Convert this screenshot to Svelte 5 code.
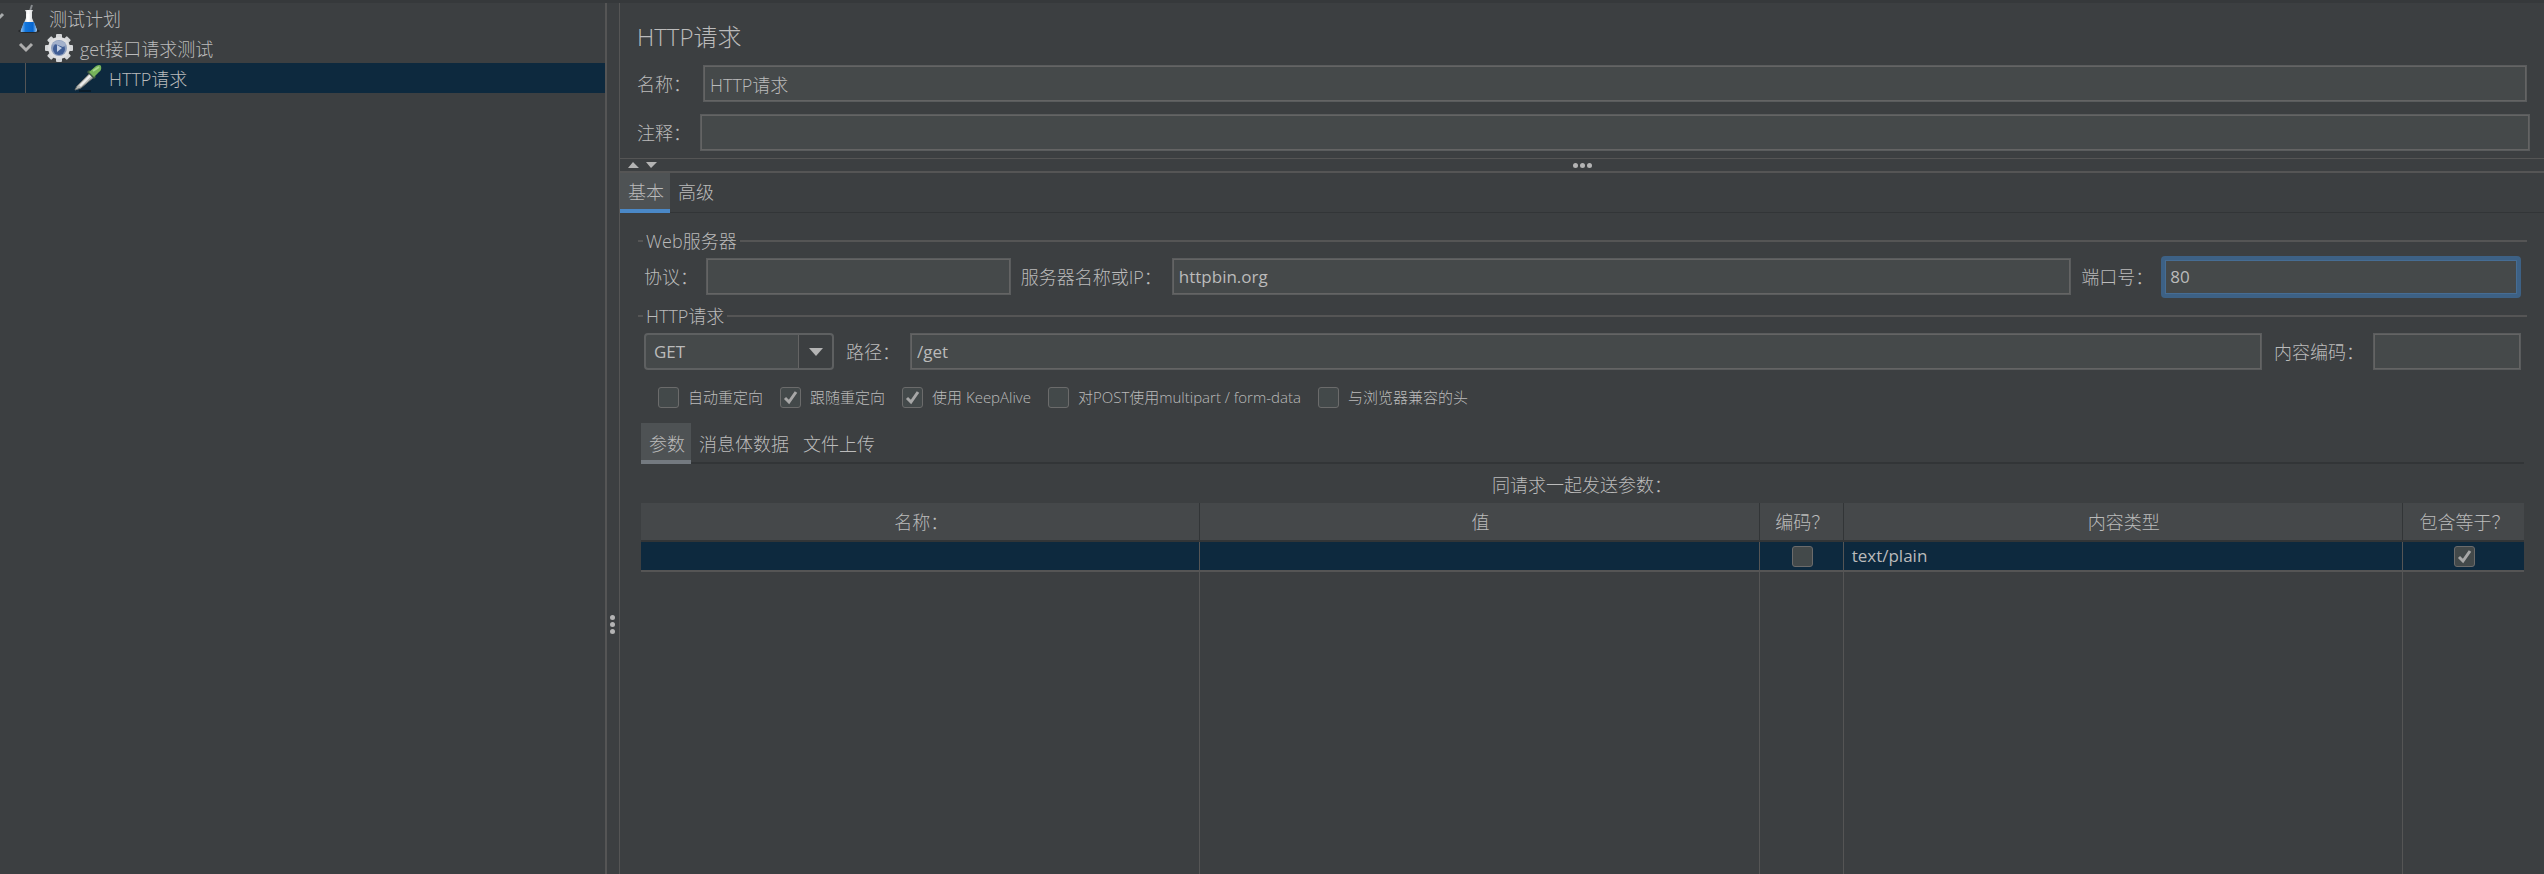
<script lang="ts">
  let name = $state('HTTP请求');
  let comment = $state('');
  let protocol = $state('');
  let server = $state('httpbin.org');
  let port = $state('80');
  let method = $state('GET');
  let path = $state('/get');
  let encoding = $state('');
  let options = $state([
    { label: '自动重定向', on: false },
    { label: '跟随重定向', on: true },
    { label: '使用 KeepAlive', on: true },
    { label: '对POST使用multipart / form-data', on: false },
    { label: '与浏览器兼容的头', on: false }
  ]);
  let rows = $state([{ name: '', value: '', encode: false, type: 'text/plain', equals: true }]);
  let mainTab = $state('基本');
  let subTab = $state('参数');
</script>

<div class="app">
  <nav class="tree" aria-label="测试计划">
    <div class="node">
      <svg class="twisty" width="14" height="30" viewBox="0 0 14 30"><path d="M-10 12 L-4 18 L3 11" fill="none" stroke="#a9acad" stroke-width="3" /></svg>
      <svg class="flask" width="24" height="30" viewBox="0 0 24 30">
        <defs>
          <linearGradient id="glass" x1="0" x2="1"><stop offset="0" stop-color="#9b9fa3" /><stop offset=".45" stop-color="#fff" /><stop offset="1" stop-color="#b5b9bd" /></linearGradient>
          <linearGradient id="liquid" x1="0" x2="1"><stop offset="0" stop-color="#8fc0f0" /><stop offset=".3" stop-color="#1276dc" /><stop offset=".75" stop-color="#0866cf" /><stop offset="1" stop-color="#a4cdf5" /></linearGradient>
        </defs>
        <ellipse cx="12" cy="28" rx="11" ry="2" fill="#26292b" />
        <path d="M13 8 L15 2" stroke="#888c8f" stroke-width="2" />
        <path d="M8 7 H16 L15 9 V15 L20 27 Q20 29 18 29 H5 Q3 29 4 27 L9 15 V9 Z" fill="url(#glass)" />
        <path d="M7 19 H17 L20 27 Q20 29 18 29 H5 Q3 29 4 27 Z" fill="url(#liquid)" />
        <path d="M11 11 V18" stroke="#fff" stroke-width="3" />
      </svg>
      <span>测试计划</span>
    </div>
    <div class="node child">
      <svg class="chevron" width="16" height="12" viewBox="0 0 16 12"><path d="M2 2 L8 8 L14 2" fill="none" stroke="#adadad" stroke-width="3" /></svg>
      <svg class="gear" width="30" height="30" viewBox="0 0 30 30">
        <g fill="#d4d6d8">
          <rect x="12" y="1" width="6" height="28" rx="1" />
          <rect x="12" y="1" width="6" height="28" rx="1" transform="rotate(45 15 15)" />
          <rect x="12" y="1" width="6" height="28" rx="1" transform="rotate(90 15 15)" />
          <rect x="12" y="1" width="6" height="28" rx="1" transform="rotate(135 15 15)" />
          <circle cx="15" cy="15" r="11" fill="#dfe0e2" />
        </g>
        <circle cx="15" cy="15" r="8" fill="#8c9dbd" />
        <circle cx="15" cy="16" r="6" fill="#3f5d95" />
        <path d="M8 12 A8 8 0 0 1 22 12 L19 14 L11 11 Z" fill="#a3b1cb" />
        <path d="M13 12 L18 15 L13 19 Z" fill="#c3cfe4" />
      </svg>
      <span>get接口请求测试</span>
    </div>
    <div class="node leaf selected">
      <svg class="dropper" width="30" height="30" viewBox="0 0 30 30">
        <path d="M6 28 L18 28" stroke="#091b29" stroke-width="2" />
        <path d="M2 27 L4 23 L17 10 L21 14 L8 25 Z" fill="#b9bcb9" stroke="#6f7472" />
        <path d="M7 23 L18 12" stroke="#eee" stroke-width="2" />
        <path d="M15 8 L22 15" stroke="#3f5a40" stroke-width="3" />
        <path d="M16 9 L23 3 Q27 1 28 3 Q29 7 26 9 L21 14 Z" fill="#77b45a" />
        <path d="M20 8 L26 4" stroke="#a6d68c" stroke-width="2" />
      </svg>
      <span>HTTP请求</span>
    </div>
  </nav>

  <div class="splitter" role="separator" aria-orientation="vertical"><i></i><i></i><i></i></div>

  <main>
    <header class="head">
      <h1>HTTP请求</h1>
      <div class="line name"><label for="name">名称：</label><input id="name" class="box" bind:value={name} /></div>
      <div class="line comment"><label for="comment">注释：</label><input id="comment" class="box" bind:value={comment} /></div>
    </header>

    <div class="hsplit">
      <svg width="30" height="8" viewBox="0 0 30 8" fill="#b4b4b4"><path d="M0 7 L5 1 L11 7 Z M18 1 H29 L23 7 Z" /></svg>
      <div class="grip"><i></i><i></i><i></i></div>
    </div>

    <div class="tabs">
      {#each ['基本', '高级'] as t}
        <button class:active={mainTab === t} onclick={() => (mainTab = t)}>{t}</button>
      {/each}
    </div>

    <div class="body">
      <section>
        <h2>Web服务器</h2>
        <div class="server">
          <label for="protocol">协议：</label><input id="protocol" class="box" bind:value={protocol} />
          <label for="server">服务器名称或IP：</label><input id="server" class="box latin" bind:value={server} />
          <label for="port">端口号：</label><input id="port" class="box latin focused" bind:value={port} />
        </div>
      </section>

      <section class="request">
        <h2>HTTP请求</h2>
        <div class="target">
          <div class="combo">
            <select class="latin" aria-label="HTTP请求" bind:value={method}>
              <option>GET</option><option>POST</option><option>PUT</option><option>DELETE</option>
            </select>
            <svg width="14" height="8" viewBox="0 0 14 8"><path d="M0 0 H14 L7 8 Z" fill="#b4b4b4" /></svg>
          </div>
          <label for="path">路径：</label><input id="path" class="box latin" bind:value={path} />
          <label for="encoding">内容编码：</label><input id="encoding" class="box" bind:value={encoding} />
        </div>
        <div class="options">
          {#each options as o}
            <label><input type="checkbox" bind:checked={o.on} />{o.label}</label>
          {/each}
        </div>
      </section>

      <div class="tabs sub">
        {#each ['参数', '消息体数据', '文件上传'] as t}
          <button class:active={subTab === t} onclick={() => (subTab = t)}>{t}</button>
        {/each}
      </div>

      <div class="caption">同请求一起发送参数：</div>

      <div class="tablewrap">
        <table>
          <colgroup><col class="wide" /><col class="wide" /><col class="enc" /><col class="wide" /><col class="eq" /></colgroup>
          <thead><tr><th>名称：</th><th>值</th><th>编码？</th><th>内容类型</th><th>包含等于？</th></tr></thead>
          <tbody>
            {#each rows as r}
              <tr class="data">
                <td>{r.name}</td>
                <td>{r.value}</td>
                <td class="mid"><input type="checkbox" aria-label="编码？" bind:checked={r.encode} /></td>
                <td class="latin">{r.type}</td>
                <td class="mid"><input type="checkbox" aria-label="包含等于？" bind:checked={r.equals} /></td>
              </tr>
            {/each}
            <tr class="rest"><td></td><td></td><td></td><td></td><td></td></tr>
          </tbody>
        </table>
      </div>
    </div>
  </main>
</div>

<style>
  :global(body) { background: #3c3f41; }
  .app, .app * { box-sizing: border-box; }
  .app {
    display: flex;
    min-height: 100vh;
    border-top: 3px solid #36393b;
    background: #3c3f41;
    color: #bbb;
    font: 300 18px/24px "Open Sans", "Noto Sans CJK SC", sans-serif;
  }
  input, select, button { font: inherit; color: inherit; }
  .latin { font-size: 17px; font-weight: 400; }

  .tree { flex: 0 0 605px; }
  .node { display: flex; align-items: center; height: 30px; white-space: nowrap; }
  .node span { padding-top: 2px; }
  .node svg { flex: none; }
  .twisty { margin-right: 3px; }
  .flask { margin-right: 8px; }
  .child { padding-left: 18px; }
  .chevron { margin-right: 10px; }
  .gear { margin-right: 6px; }
  .leaf { padding-left: 73px; }
  .dropper { margin-right: 6px; }
  .selected { background: linear-gradient(#555, #555) 25px 0 / 1px 100% no-repeat #0d293e; }

  .splitter {
    display: flex;
    flex: 0 0 15px;
    flex-direction: column;
    align-items: center;
    gap: 2px;
    padding-top: 70vh;
    padding-right: 1px;
    border-left: 2px solid #555;
    border-right: 1px solid #555;
  }
  .splitter i, .grip i { width: 5px; height: 5px; border-radius: 50%; background: #b4b4b4; }

  main { display: flex; flex: 1; flex-direction: column; min-width: 0; }
  .head { padding: 18px 14px 7px 17px; }
  h1 { margin: 0 0 12px; font-size: 24px; font-weight: 300; line-height: 32px; }
  .line { display: flex; align-items: center; }
  .line label { flex: none; width: 63px; }
  .name { padding-right: 3px; }
  .name label { width: 66px; }
  .comment { margin-top: 12px; }
  .box {
    flex: 1;
    width: 100%;
    min-width: 0;
    height: 37px;
    padding: 0 6px;
    border: 1px solid #5a5c5d;
    border-radius: 0;
    outline: none;
    background: #45494a;
    box-shadow: inset 0 0 0 1px #646464;
  }
  .focused {
    height: 42px;
    padding: 0 5px;
    border: 4px solid #3d6185;
    border-radius: 4px;
    box-shadow: inset 0 0 0 1px #466d94;
  }

  .hsplit {
    display: grid;
    grid-template-columns: 30px 1fr 30px;
    align-items: center;
    height: 15px;
    padding: 0 8px;
    border-top: 1px solid #555;
    border-bottom: 2px solid #555;
  }
  .grip { display: flex; justify-content: center; gap: 2px; }

  .tabs { display: flex; height: 40px; box-shadow: inset 0 -1px #323537; }
  .tabs button { padding: 2px 6px 0 8px; border: 0; border-bottom: 4px solid transparent; background: none; }
  .tabs button.active { border-bottom-color: #4a88c7; background: #4e5254; }
  .sub { height: 41px; margin: 15px 3px 0 4px; box-shadow: inset 0 -2px #323537; }
  .sub button { padding-top: 4px; }
  .sub button.active { border-bottom-color: #747a80; }

  .body { display: flex; flex: 1; flex-direction: column; padding: 16px 17px 0; }
  section { padding: 0 6px 0 7px; }
  h2 {
    display: flex;
    align-items: center;
    gap: 3px;
    margin: 0 -6px 2px;
    font-size: 18px;
    font-weight: 300;
    line-height: 24px;
  }
  h2::before, h2::after { width: 5px; height: 2px; background: #555; content: ""; }
  h2::after { flex: 1; }
  .server, .target { display: grid; align-items: center; height: 43px; }
  .server { grid-template-columns: 62px 305fr 161px 900fr 90px 360fr; }
  .server label + input + label { padding-left: 10px; }
  .request { padding-top: 6px; }
  .target { grid-template-columns: 190px 76px 1fr 111px 148px; }
  .target label { padding-left: 12px; }
  label { white-space: nowrap; }
  .combo { position: relative; }
  .combo select {
    display: block;
    width: 100%;
    height: 37px;
    padding: 0 8px;
    border: 2px solid #5e6061;
    border-radius: 4px;
    outline: none;
    appearance: none;
    background: linear-gradient(90deg, #45494a calc(100% - 34px), #646464 calc(100% - 34px), #646464 calc(100% - 33px), #3c3f41 calc(100% - 33px));
  }
  .combo svg { position: absolute; top: 15px; right: 11px; pointer-events: none; }

  .options { display: flex; gap: 17px; padding: 13px 0 0 14px; font-size: 15px; line-height: 22px; }
  .options label { display: flex; align-items: center; gap: 9px; height: 22px; }
  input[type="checkbox"] {
    flex: none;
    width: 21px;
    height: 21px;
    margin: 0;
    border: 1px solid #6b6b6b;
    border-radius: 3px;
    appearance: none;
    background: #43494a;
  }
  input[type="checkbox"]:checked {
    background: #43494a url("data:image/svg+xml,%3Csvg xmlns='http://www.w3.org/2000/svg' viewBox='0 0 19 19'%3E%3Cpath d='M4 10 L8 14 L15 4' fill='none' stroke='%23a7a7a7' stroke-width='3'/%3E%3C/svg%3E") center / 19px 19px no-repeat;
  }

  .caption { height: 39px; padding: 9px 0 6px; text-align: center; }
  .tablewrap { display: grid; flex: 1; margin: 0 3px 0 4px; }
  table { width: 100%; height: 100%; border-collapse: separate; border-spacing: 0; table-layout: fixed; }
  .enc { width: 84px; }
  .eq { width: 121px; }
  th { height: 39px; padding: 0 0 0 2px; border-right: 1px solid #323537; border-bottom: 2px solid #323537; background: #45484a; font-weight: 300; }
  td { padding: 0 8px; border-right: 1px solid #555; }
  th:last-child, td:last-child { border-right: 0; }
  .data td { height: 30px; border-bottom: 2px solid #555; background-color: #0d293e; }
  .data .mid { padding: 0 0 0 2px; text-align: center; line-height: 0; }
</style>
